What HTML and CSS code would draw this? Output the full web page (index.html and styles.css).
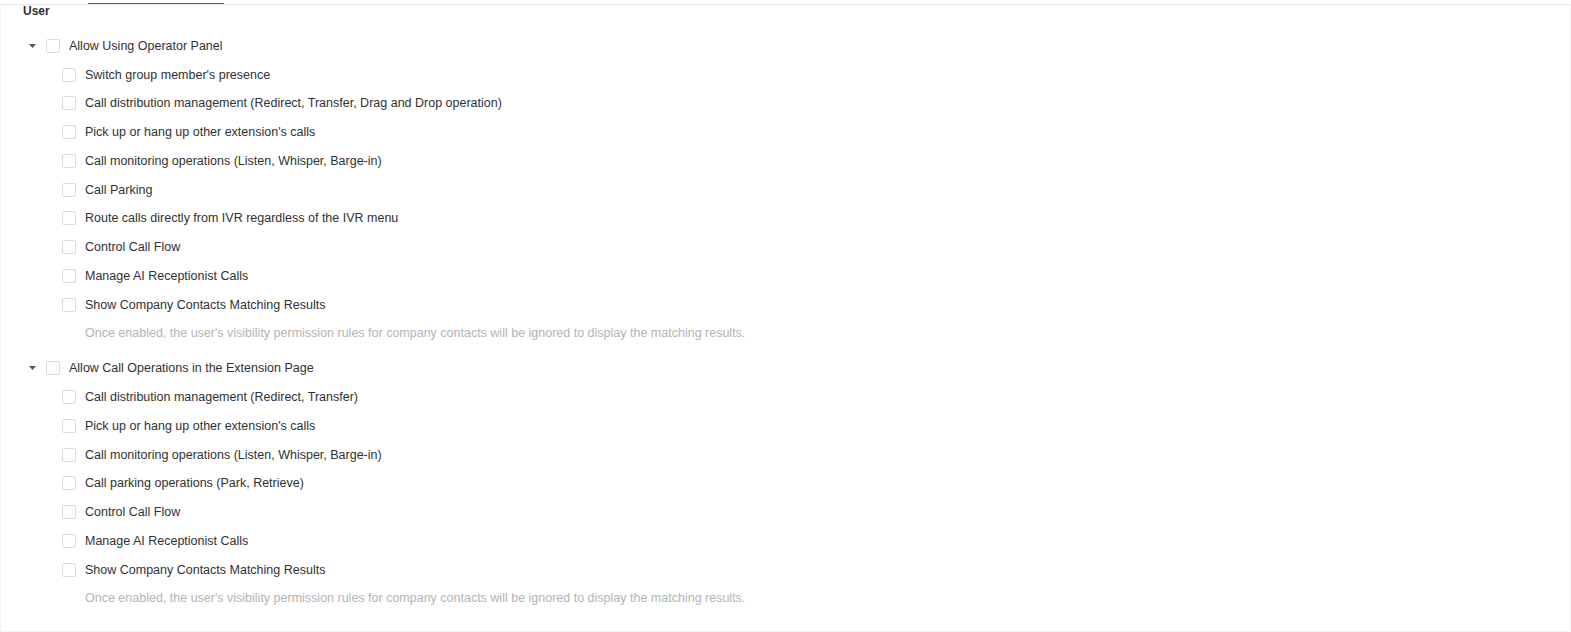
FILE: index.html
```html
<!DOCTYPE html>
<html>
<head>
<meta charset="utf-8">
<link rel="stylesheet" href="styles.css">
</head>
<body>
<div class="tabs"><div class="tab-ink"></div></div>
<div class="panel">
  <div class="title">User</div>
  <div class="tree">
    <div class="group">
      <div class="row parent"><span class="caret"><svg width="7" height="4" viewBox="0 0 7 4"><path d="M0 0 H7 L3.5 4 Z" fill="#555"/></svg></span><span class="cb"></span><span class="label">Allow Using Operator Panel</span></div>
      <div class="row child"><span class="cb"></span><span class="label">Switch group member's presence</span></div>
      <div class="row child"><span class="cb"></span><span class="label">Call distribution management (Redirect, Transfer, Drag and Drop operation)</span></div>
      <div class="row child"><span class="cb"></span><span class="label">Pick up or hang up other extension's calls</span></div>
      <div class="row child"><span class="cb"></span><span class="label">Call monitoring operations (Listen, Whisper, Barge-in)</span></div>
      <div class="row child"><span class="cb"></span><span class="label">Call Parking</span></div>
      <div class="row child"><span class="cb"></span><span class="label">Route calls directly from IVR regardless of the IVR menu</span></div>
      <div class="row child"><span class="cb"></span><span class="label">Control Call Flow</span></div>
      <div class="row child"><span class="cb"></span><span class="label">Manage AI Receptionist Calls</span></div>
      <div class="row child"><span class="cb"></span><span class="label">Show Company Contacts Matching Results</span></div>
      <div class="row desc">Once enabled, the user's visibility permission rules for company contacts will be ignored to display the matching results.</div>
    </div>
    <div class="group">
      <div class="row parent"><span class="caret"><svg width="7" height="4" viewBox="0 0 7 4"><path d="M0 0 H7 L3.5 4 Z" fill="#555"/></svg></span><span class="cb"></span><span class="label">Allow Call Operations in the Extension Page</span></div>
      <div class="row child"><span class="cb"></span><span class="label">Call distribution management (Redirect, Transfer)</span></div>
      <div class="row child"><span class="cb"></span><span class="label">Pick up or hang up other extension's calls</span></div>
      <div class="row child"><span class="cb"></span><span class="label">Call monitoring operations (Listen, Whisper, Barge-in)</span></div>
      <div class="row child"><span class="cb"></span><span class="label">Call parking operations (Park, Retrieve)</span></div>
      <div class="row child"><span class="cb"></span><span class="label">Control Call Flow</span></div>
      <div class="row child"><span class="cb"></span><span class="label">Manage AI Receptionist Calls</span></div>
      <div class="row child"><span class="cb"></span><span class="label">Show Company Contacts Matching Results</span></div>
      <div class="row desc">Once enabled, the user's visibility permission rules for company contacts will be ignored to display the matching results.</div>
    </div>
  </div>
</div>
</body>
</html>
```

FILE: styles.css
```css
html, body {
  margin: 0;
  padding: 0;
  background: #fff;
}
body {
  font-family: "Liberation Sans", Arial, sans-serif;
  font-size: 12.5px;
  color: #303133;
}
.tabs {
  height: 4px;
  display: flex;
  align-items: flex-end;
}
.tab-ink {
  margin-left: 88px;
  width: 136px;
  height: 1px;
  background: #2b6ca3;
}
.panel {
  width: 1571px;
  height: 628px;
  box-sizing: border-box;
  border-top: 1px solid #e9e9e9;
  border-left: 1px solid #f4f4f4;
  border-right: 1px solid #f4f4f4;
  border-bottom: 1px solid #f4f4f4;
}
.title {
  font-weight: bold;
  font-size: 12px;
  line-height: 12px;
  padding-left: 22px;
  margin-bottom: 14.6px;
  color: #303133;
}
.group + .group {
  margin-top: 6.2px;
}
.row {
  height: 28.75px;
  display: flex;
  align-items: center;
  white-space: nowrap;
}
.parent {
  padding-left: 28px;
}
.caret {
  width: 8px;
  height: 4px;
  display: flex;
  margin-right: 9px;
}
.caret svg {
  display: block;
}
.child {
  padding-left: 61px;
}
.cb {
  width: 14px;
  height: 14px;
  box-sizing: border-box;
  border: 1px solid #dcdcdc;
  border-radius: 2px;
  background: #fff;
  margin-right: 9px;
  flex: none;
}
.label {
  color: #303133;
}
.desc {
  padding-left: 84px;
  color: #b4b4b4;
}
```
